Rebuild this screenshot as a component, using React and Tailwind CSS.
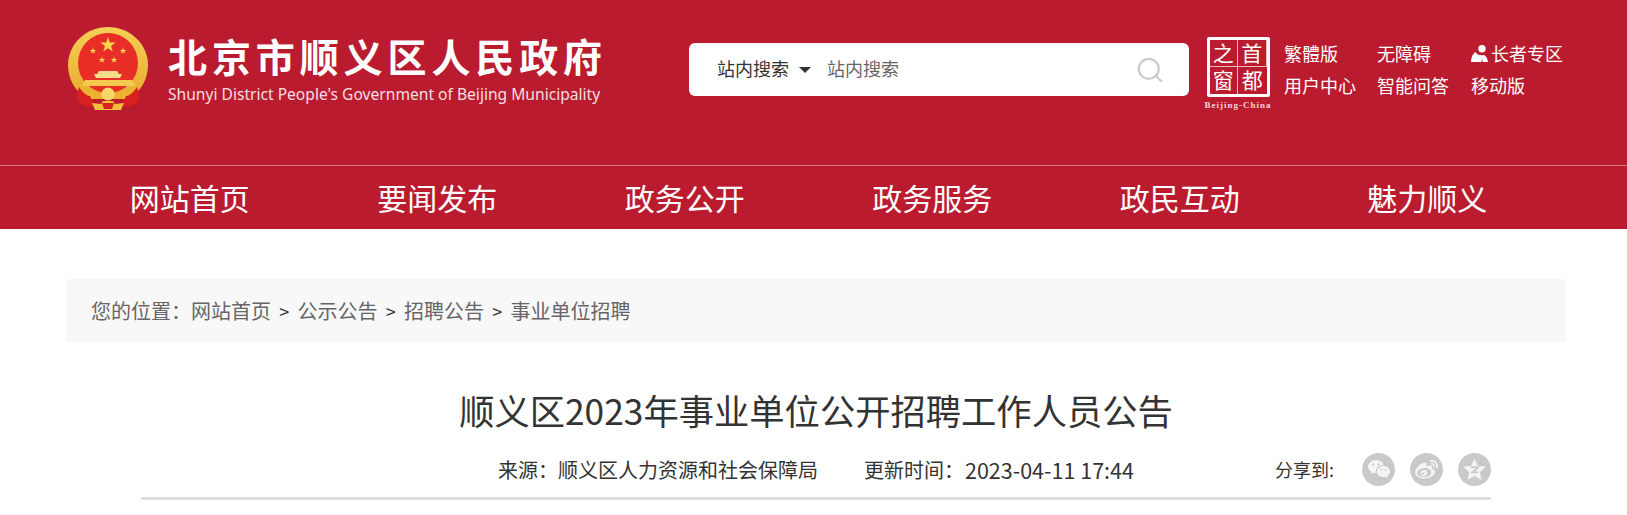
import { Search } from "lucide-react";
import { RiWechatFill, RiWeiboFill } from "react-icons/ri";

const cjk = { fontFamily: '"Noto Sans CJK SC", sans-serif' };

const navItems = ["网站首页", "要闻发布", "政务公开", "政务服务", "政民互动", "魅力顺义"];

const Star = ({ cx, cy, r, fill = "#f8d64e" }) => {
  const pts = [];
  for (let i = 0; i < 10; i++) {
    const rad = i % 2 === 0 ? r : r * 0.4;
    const a = (Math.PI / 5) * i - Math.PI / 2;
    pts.push(`${cx + rad * Math.cos(a)},${cy + rad * Math.sin(a)}`);
  }
  return <polygon points={pts.join(" ")} fill={fill} />;
};

const Emblem = () => (
  <svg width="80" height="84" viewBox="0 0 80 84" className="shrink-0">
    <defs>
      <linearGradient id="ring" x1="0" y1="0" x2="0" y2="1">
        <stop offset="0" stopColor="#f5cf55" />
        <stop offset="1" stopColor="#e9ad30" />
      </linearGradient>
    </defs>
    <path d="M40 0c22 0 40 17 40 38 0 13-6 24-15 31H15C6 62 0 51 0 38 0 17 18 0 40 0z" fill="url(#ring)" />
    <ellipse cx="40" cy="36" rx="30" ry="30" fill="#e82e26" />
    <Star cx={40} cy={18} r={8} />
    <Star cx={25} cy={24} r={3.4} />
    <Star cx={55} cy={24} r={3.4} />
    <Star cx={34} cy={33} r={3.4} />
    <Star cx={46} cy={33} r={3.4} />
    <path d="M31 44h18l2 3h3l-2 4H28l-2-4h3z" fill="#f9dc8a" />
    <path d="M17 53h47l3 6H14z" fill="#f5c94d" />
    <path d="M11 60c3 5 8 9 14 11l1 8c-7 1-12-1-16-5-1-5-1-9 1-14z" fill="#d8201f" />
    <path d="M69 60c-3 5-8 9-14 11l-1 8c7 1 12-1 16-5 1-5 1-9-1-14z" fill="#d8201f" />
    <path d="M20 62c6 5 11 6 20 5 9 1 14 0 20-5l-3 10H23z" fill="#efb12f" />
    <circle cx="40" cy="67" r="6.500" fill="#f8d568" />
    <path d="M24 76l9 1 2-3h10l2 3 9-1-3 7H27z" fill="#f2bd3a" />
    <path d="M34 76h12l-2 6h-8z" fill="#d8201f" />
  </svg>
);

const LogoText = () => (
  <div className="flex flex-col ml-[20px] w-[436px] shrink-0">
    <div className="text-white font-bold text-[39px] leading-[44px] tracking-[4.900px] whitespace-nowrap" style={cjk}>
      北京市顺义区人民政府
    </div>
    <div className="text-[#f3dfe2] text-[15.600px] leading-[18px] mt-[8px] whitespace-nowrap font-['Noto_Sans',sans-serif]">
      Shunyi District People's Government of Beijing Municipality
    </div>
  </div>
);

const CapitalLogo = () => (
  <div className="flex flex-col items-center w-[70px] shrink-0">
    <div className="w-[63px] h-[60px] border-[3px] border-white rounded-[2px] grid grid-cols-2 grid-rows-2 text-white text-[21px] leading-none divide-x divide-white/70" style={cjk}>
      <span className="flex items-center justify-center border-b border-white/70 pb-[2px]">之</span>
      <span className="flex items-center justify-center border-b border-white/70 pb-[2px]">首</span>
      <span className="flex items-center justify-center pb-[2px]">窗</span>
      <span className="flex items-center justify-center pb-[2px]">都</span>
    </div>
    <div className="text-[#f2d3d7] text-[9px] leading-[10px] mt-[3px] font-bold font-['Liberation_Serif',serif] tracking-[1px] whitespace-nowrap">
      Beijing-China
    </div>
  </div>
);

const PersonIcon = () => (
  <svg width="17" height="17" viewBox="0 0 17 17" className="mr-[3px]">
    <circle cx="11" cy="3.700" r="3.700" fill="#fff" />
    <path d="M0 17c0-4.500 1.500-8 4.500-10 1 2 3 3.300 6 3.300.8 0 1.500-.1 2.500-.3 2 1 3.500 3.500 4 7h-5.500v-3.500L10.200 17z" fill="#fff" />
  </svg>
);

const QzoneIcon = () => (
  <svg width="25" height="25" viewBox="0 0 24 24">
    <path d="M12 1.500l3.200 7 7.600.9-5.600 5.100 1.500 7.500L12 18.300 5.300 22l1.500-7.500L1.200 9.400l7.600-.9z" fill="#f4f4f4" />
    <path d="M8.500 9.800h7l-5.500 5h5.500" fill="none" stroke="#c9c9c9" strokeWidth="1.700" />
  </svg>
);

const ShareCircle = ({ children }) => (
  <span className="w-[33px] h-[33px] rounded-full bg-[#c9c9c9] flex items-center justify-center text-[#f4f4f4]">{children}</span>
);

export default function App() {
  return (
    <div className="w-full bg-white overflow-hidden" style={cjk}>
      <header className="bg-[#bb1b2e]">
        <div className="h-[165px] border-b border-white/40 box-content">
          <div className="flex items-start w-[1500px] ml-[68px] pt-[27px]">
            <Emblem />
            <div className="mt-[6px]">
              <LogoText />
            </div>
            <div className="flex items-center h-[53px] w-[500px] bg-white rounded-[6px] ml-[85px] mt-[16px] pb-[3px] shrink-0 text-[18px]">
              <span className="ml-[28px] text-[#333] leading-none">站内搜索</span>
              <span className="ml-[10px] mt-[3px] w-0 h-0 border-x-[6px] border-x-transparent border-t-[6px] border-t-[#333]" />
              <span className="ml-[16px] text-[#666] leading-none">站内搜索</span>
              <Search className="ml-auto mr-[24px] mt-[3px] text-[#cccccc]" size={30} strokeWidth={1.800} />
            </div>
            <div className="ml-[14px] mt-[10px]">
              <CapitalLogo />
            </div>
            <div className="grid grid-cols-[93px_94px_auto] grid-rows-[33px_31px] ml-[11px] mt-[10px] text-white text-[18px] items-center whitespace-nowrap">
              <span>繁體版</span>
              <span>无障碍</span>
              <span className="flex items-center"><PersonIcon />长者专区</span>
              <span>用户中心</span>
              <span>智能问答</span>
              <span>移动版</span>
            </div>
          </div>
        </div>
        <nav className="flex w-[1500px] ml-[66px] h-[63px] pb-[1px] items-center text-white text-[30px]">
          {navItems.map((item) => (
            <a key={item} className="w-[247.5px] text-center leading-none">{item}</a>
          ))}
        </nav>
      </header>

      <main className="w-[1500px] ml-[66px]">
        <div className="mt-[50px] h-[63px] pt-[1px] bg-[#f8f8f8] flex items-center pl-[25px] text-[20px] text-[#666] whitespace-nowrap">
          <span>您的位置：</span>
          <span>网站首页</span>
          <span className="mx-[8.250px] text-[#333] text-[18px]">&gt;</span>
          <span>公示公告</span>
          <span className="mx-[8.250px] text-[#333] text-[18px]">&gt;</span>
          <span>招聘公告</span>
          <span className="mx-[8.250px] text-[#333] text-[18px]">&gt;</span>
          <span>事业单位招聘</span>
        </div>

        <div className="w-[1350px] ml-[75px]">
          <h1 className="mt-[43px] text-center text-[35.300px] leading-[50px] text-[#333]">顺义区2023年事业单位公开招聘工作人员公告</h1>
          <div className="flex items-center h-[33px] mt-[18px] text-[20px] text-[#333]">
            <span className="ml-[357px]">来源：顺义区人力资源和社会保障局</span>
            <span className="ml-[46px]">更新时间：</span>
            <span className="ml-[1px] text-[21.500px] leading-none">2023-04-11 17:44</span>
            <span className="ml-auto mr-[28px] text-[18px]">分享到:</span>
            <div className="flex gap-[15px] -mt-[1px]">
              <ShareCircle><RiWechatFill size={24} /></ShareCircle>
              <ShareCircle><RiWeiboFill size={25} /></ShareCircle>
              <ShareCircle><QzoneIcon /></ShareCircle>
            </div>
          </div>
          <div className="mt-[11px] h-[3px] bg-[#dddddd]" />
        </div>
      </main>
    </div>
  );
}
